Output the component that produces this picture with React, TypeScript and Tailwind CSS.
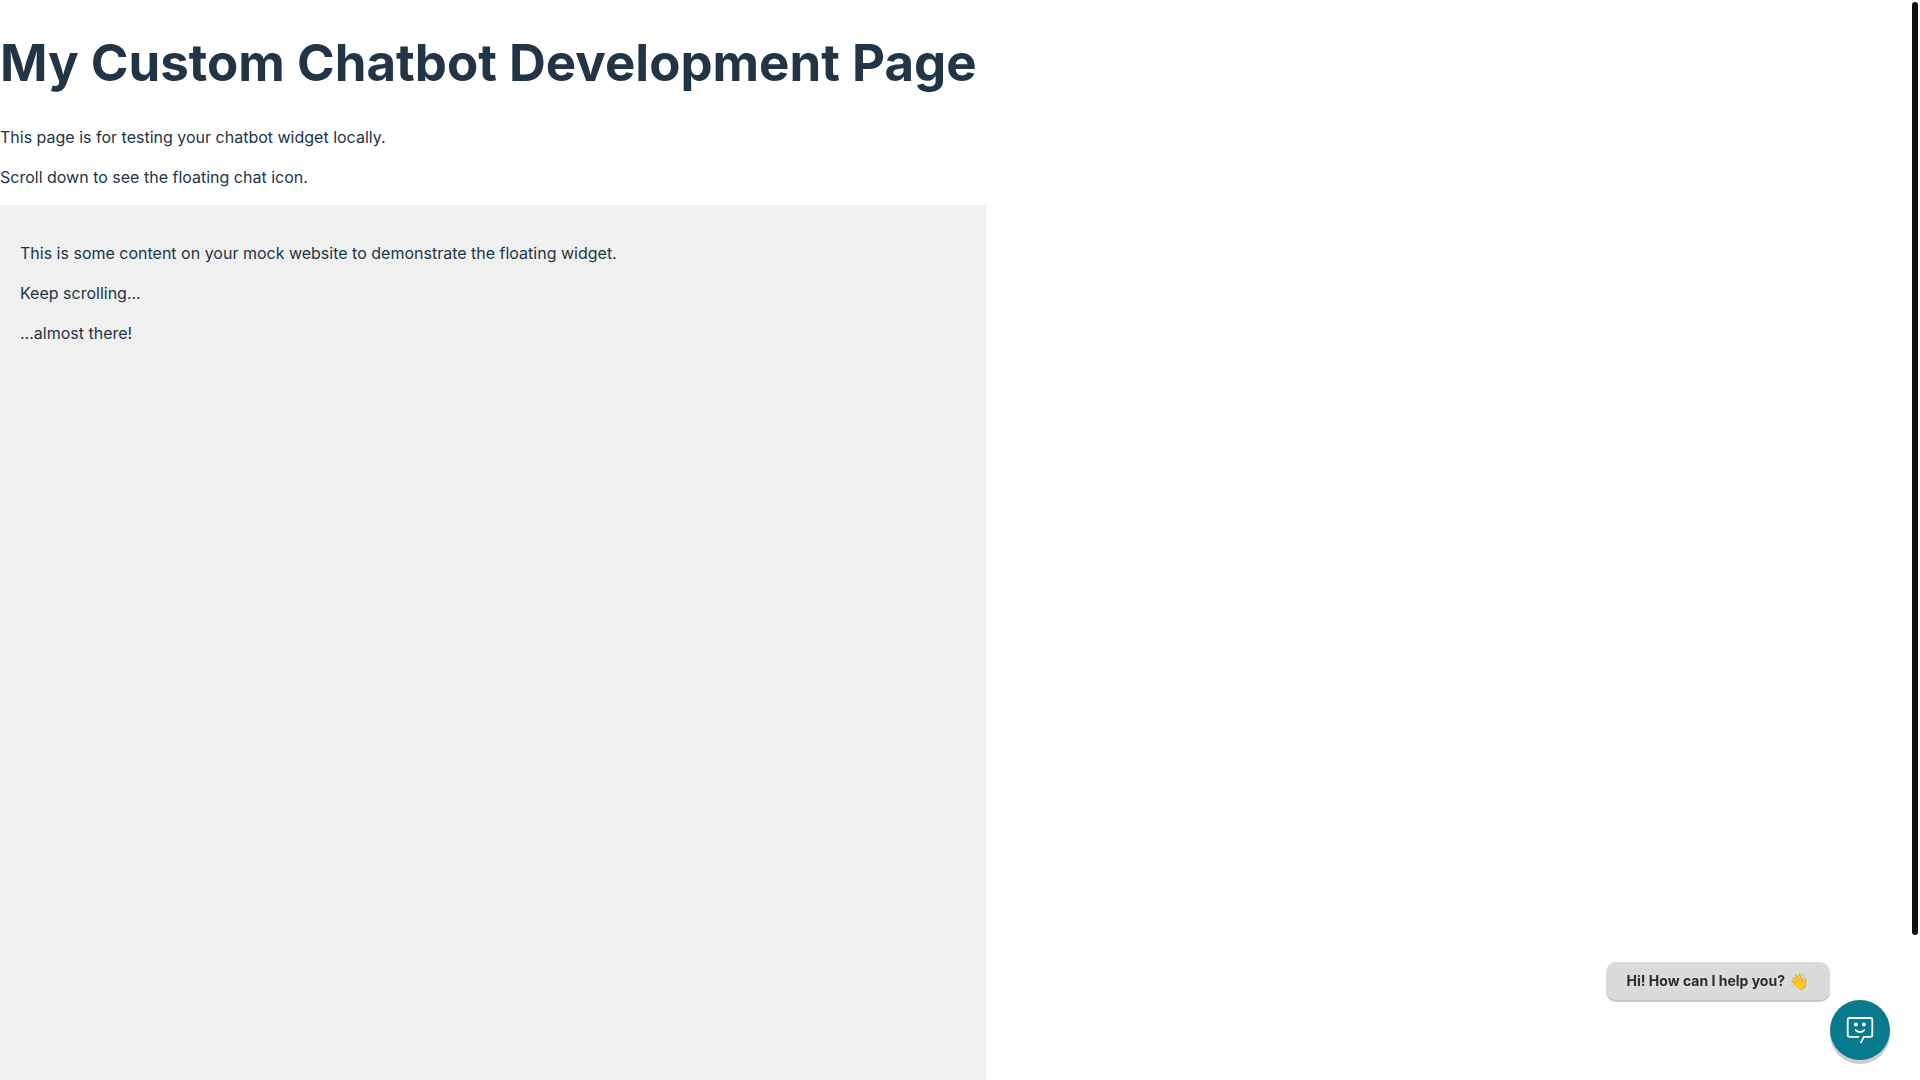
import { useEffect, useRef, useState } from 'react';

const TRACK_INSET = 2;

function ChatFaceIcon() {
  return (
    <svg
      className="size-7"
      viewBox="0 0 28 28"
      fill="none"
      stroke="currentColor"
      strokeWidth="1.8"
      strokeLinecap="round"
      strokeLinejoin="round"
      aria-hidden="true"
    >
      <path d="M12.4 20.9H3.6c-1.2 0-1.9-.7-1.9-1.9V3.9C1.7 2.7 2.4 2 3.6 2h20.8c1.2 0 1.9.7 1.9 1.9V19c0 1.2-.7 1.9-1.9 1.9h-6.6l-2.8 5.4" />
      <path d="M9.8 14.2c2.2 2.5 6.2 2.5 8.4 0" />
      <circle cx="9.9" cy="8.4" r="2" fill="currentColor" stroke="none" />
      <circle cx="17.9" cy="8.4" r="2" fill="currentColor" stroke="none" />
    </svg>
  );
}

function ChatWidget() {
  const [isOpen, setIsOpen] = useState(false);

  return (
    <div className="fixed right-[30px] bottom-5 flex items-start">
      <div className="-mt-[38px] flex h-[38px] items-center gap-1 rounded-[10px] bg-[#dbdbdb] px-[21px] text-sm font-bold text-[#2b2b2b] shadow-[0_2px_0_#c8c8c8]">
        Hi! How can I help you? <span className="text-base">👋</span>
      </div>
      <button
        type="button"
        aria-label="Open chat"
        aria-expanded={isOpen}
        onClick={() => setIsOpen(!isOpen)}
        className="flex size-[60px] cursor-pointer items-center justify-center rounded-full bg-[#077a8d] text-white shadow-[0_4px_0_#cccccc]"
      >
        <ChatFaceIcon />
      </button>
    </div>
  );
}

export default function App() {
  const scrollRef = useRef<HTMLDivElement>(null);
  const [thumb, setThumb] = useState({ top: TRACK_INSET, height: 0 });

  const updateThumb = () => {
    const el = scrollRef.current;
    if (!el) return;
    const track = el.clientHeight - TRACK_INSET * 2;
    setThumb({
      top: Math.round(TRACK_INSET + (el.scrollTop / el.scrollHeight) * track),
      height: Math.round((el.clientHeight / el.scrollHeight) * track),
    });
  };

  useEffect(() => {
    updateThumb();
    window.addEventListener('resize', updateThumb);
    return () => window.removeEventListener('resize', updateThumb);
  }, []);

  return (
    <div className="relative bg-white font-['Inter',sans-serif] text-[#213547]">
      <div ref={scrollRef} onScroll={updateThumb} className="h-screen overflow-y-auto [scrollbar-width:none]">
        <main className="w-full max-w-[986px]">
          <h1 className="py-[34px] text-[51px] leading-[57px] font-bold">My Custom Chatbot Development Page</h1>
          <div className="space-y-4 pb-4">
            <p>This page is for testing your chatbot widget locally.</p>
            <p>Scroll down to see the floating chat icon.</p>
          </div>
          <section className="h-[1040px] space-y-4 bg-[#f0f0f0] px-5 py-9">
            <p>This is some content on your mock website to demonstrate the floating widget.</p>
            <p>Keep scrolling...</p>
            <p>...almost there!</p>
          </section>
        </main>
      </div>

      <div className="absolute right-0.5 w-1.5 rounded-full bg-[#111111]" style={thumb} />

      <ChatWidget />
    </div>
  );
}
